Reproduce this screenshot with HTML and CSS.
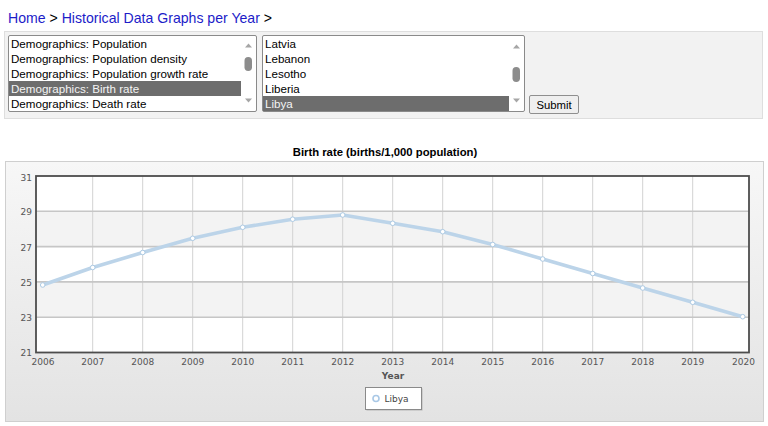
FILE: index.html
```html
<!DOCTYPE html>
<html>
<head>
<meta charset="utf-8">
<title>Historical Data Graphs per Year</title>
<link rel="stylesheet" href="styles.css">
</head>
<body>
<div class="crumbs"><a href="#">Home</a> &gt; <a href="#">Historical Data Graphs per Year</a> &gt;</div>
<form class="panel">
  <div class="listbox lb1">
    <ul class="opts">
      <li>Demographics: Population</li>
      <li>Demographics: Population density</li>
      <li>Demographics: Population growth rate</li>
      <li class="sel">Demographics: Birth rate</li>
      <li>Demographics: Death rate</li>
    </ul>
    <svg class="sbar" width="15" height="75" viewBox="0 0 15 75">
      <path d="M4 11.5 L7.5 7.5 L11 11.5 Z" fill="#a6a6a6"/>
      <rect x="3.5" y="21" width="7.5" height="14" rx="3.7" fill="#8c8c8c"/>
      <path d="M4 62.5 L7.5 66.5 L11 62.5 Z" fill="#a6a6a6"/>
    </svg>
  </div>
  <div class="listbox lb2">
    <ul class="opts">
      <li>Latvia</li>
      <li>Lebanon</li>
      <li>Lesotho</li>
      <li>Liberia</li>
      <li class="sel">Libya</li>
    </ul>
    <svg class="sbar" width="15" height="75" viewBox="0 0 15 75">
      <path d="M4 12.5 L7.5 8.5 L11 12.5 Z" fill="#a6a6a6"/>
      <rect x="3.5" y="31" width="7.5" height="15" rx="3.7" fill="#8c8c8c"/>
      <path d="M4 62.5 L7.5 66.5 L11 62.5 Z" fill="#a6a6a6"/>
    </svg>
  </div>
  <button type="button" class="submit">Submit</button>
</form>
<h2 class="title">Birth rate (births/1,000 population)</h2>
<div class="chart">
  <svg class="plot" width="757" height="259" viewBox="6 162 757 259">
    <rect x="36" y="176" width="713" height="176.5" fill="#ffffff"/>
    <rect x="36" y="211.3" width="713" height="35.3" fill="#f3f3f3"/>
    <rect x="36" y="281.9" width="713" height="35.3" fill="#f3f3f3"/>
    <g stroke="#d2d2d2" stroke-width="1">
      <line x1="92.7" y1="176" x2="92.7" y2="352.5"/>
      <line x1="142.7" y1="176" x2="142.7" y2="352.5"/>
      <line x1="192.7" y1="176" x2="192.7" y2="352.5"/>
      <line x1="242.7" y1="176" x2="242.7" y2="352.5"/>
      <line x1="292.7" y1="176" x2="292.7" y2="352.5"/>
      <line x1="342.7" y1="176" x2="342.7" y2="352.5"/>
      <line x1="392.7" y1="176" x2="392.7" y2="352.5"/>
      <line x1="442.7" y1="176" x2="442.7" y2="352.5"/>
      <line x1="492.7" y1="176" x2="492.7" y2="352.5"/>
      <line x1="542.7" y1="176" x2="542.7" y2="352.5"/>
      <line x1="592.7" y1="176" x2="592.7" y2="352.5"/>
      <line x1="642.7" y1="176" x2="642.7" y2="352.5"/>
      <line x1="692.7" y1="176" x2="692.7" y2="352.5"/>
    </g>
    <g stroke="#c6c6c6" stroke-width="1.6">
      <line x1="36" y1="211.3" x2="749" y2="211.3"/>
      <line x1="36" y1="246.6" x2="749" y2="246.6"/>
      <line x1="36" y1="281.9" x2="749" y2="281.9"/>
      <line x1="36" y1="317.2" x2="749" y2="317.2"/>
    </g>
    <rect x="36" y="176" width="713" height="176.5" fill="none" stroke="#4d4d4d" stroke-width="1.8"/>
    <polyline fill="none" stroke="#bcd4e9" stroke-width="3.5" stroke-linejoin="round" stroke-linecap="round"
      points="42.7,285 92.7,267.5 142.7,252.5 192.7,238.3 242.7,227.3 292.7,219.2 342.7,215 392.7,223.3 442.7,231.7 492.7,244.5 542.7,259 592.7,273.5 642.7,288 692.7,302.3 742.7,316.7"/>
    <g fill="#ffffff" stroke="#aecbe4" stroke-width="1">
      <circle cx="42.7" cy="285" r="2.3"/>
      <circle cx="92.7" cy="267.5" r="2.3"/>
      <circle cx="142.7" cy="252.5" r="2.3"/>
      <circle cx="192.7" cy="238.3" r="2.3"/>
      <circle cx="242.7" cy="227.3" r="2.3"/>
      <circle cx="292.7" cy="219.2" r="2.3"/>
      <circle cx="342.7" cy="215" r="2.3"/>
      <circle cx="392.7" cy="223.3" r="2.3"/>
      <circle cx="442.7" cy="231.7" r="2.3"/>
      <circle cx="492.7" cy="244.5" r="2.3"/>
      <circle cx="542.7" cy="259" r="2.3"/>
      <circle cx="592.7" cy="273.5" r="2.3"/>
      <circle cx="642.7" cy="288" r="2.3"/>
      <circle cx="692.7" cy="302.3" r="2.3"/>
      <circle cx="742.7" cy="316.7" r="2.3"/>
    </g>
    <g class="ylab" text-anchor="end">
      <text x="32" y="180.5">31</text>
      <text x="32" y="215.3">29</text>
      <text x="32" y="250.6">27</text>
      <text x="32" y="285.9">25</text>
      <text x="32" y="321.2">23</text>
      <text x="32" y="356">21</text>
    </g>
    <g class="xlab" text-anchor="middle">
      <text x="43" y="364.5">2006</text>
      <text x="92.7" y="364.5">2007</text>
      <text x="142.7" y="364.5">2008</text>
      <text x="192.7" y="364.5">2009</text>
      <text x="242.7" y="364.5">2010</text>
      <text x="292.7" y="364.5">2011</text>
      <text x="342.7" y="364.5">2012</text>
      <text x="392.7" y="364.5">2013</text>
      <text x="442.7" y="364.5">2014</text>
      <text x="492.7" y="364.5">2015</text>
      <text x="542.7" y="364.5">2016</text>
      <text x="592.7" y="364.5">2017</text>
      <text x="642.7" y="364.5">2018</text>
      <text x="692.7" y="364.5">2019</text>
      <text x="743.5" y="364.5">2020</text>
    </g>
    <text class="axtitle" x="393" y="378.5" text-anchor="middle">Year</text>
    <rect x="366.5" y="388.5" width="56" height="22" fill="#b5b5b5"/>
    <rect x="365.5" y="387.5" width="56" height="22" fill="#ffffff" stroke="#8a8a8a" stroke-width="1"/>
    <circle cx="376" cy="398.5" r="3" fill="#ffffff" stroke="#a9c8e6" stroke-width="1.6"/>
    <text class="leg" x="384.5" y="401.8">Libya</text>
  </svg>
</div>
</body>
</html>
```

FILE: styles.css
```css
html, body {
  margin: 0;
  padding: 0;
  background: #ffffff;
}

body {
  font-family: "Liberation Sans", Arial, sans-serif;
  color: #000000;
}

.crumbs {
  padding: 9px 0 0 8px;
  font-size: 14.1px;
  line-height: 18px;
  height: 18px;
}

.crumbs a {
  color: #1c1cc8;
  text-decoration: none;
}

.panel {
  margin: 4px 0 0 4px;
  width: 759px;
  box-sizing: border-box;
  background: #f2f2f2;
  border: 1px solid #dedede;
  padding: 3px 3px 6px 3px;
  display: flex;
  align-items: flex-end;
}

.listbox {
  box-sizing: border-box;
  height: 77px;
  border: 1px solid #8a8a8a;
  border-radius: 2px;
  background: #ffffff;
  display: flex;
}

.lb1 {
  width: 249px;
}

.lb2 {
  width: 263px;
  margin-left: 5px;
}

.opts {
  list-style: none;
  margin: 0;
  padding: 0;
  flex: 1;
  min-width: 0;
}

.opts li {
  font-size: 11.6px;
  line-height: 15px;
  height: 15px;
  padding-left: 2px;
  white-space: nowrap;
  overflow: hidden;
}

.opts li.sel {
  background: #6d6d6d;
  color: #f4f4f4;
}

.sbar {
  flex: none;
  display: block;
}

.submit {
  margin: 0 0 -2px 4px;
  width: 50px;
  height: 19px;
  padding: 0;
  font-family: "Liberation Sans", Arial, sans-serif;
  font-size: 11.3px;
  color: #000000;
  background: #efefef;
  border: 1px solid #8f8f8f;
  border-radius: 2px;
}

.title {
  margin: 26px 0 2px 0;
  font-size: 11.3px;
  line-height: 14px;
  font-weight: bold;
  text-align: center;
  width: 770px;
}

.chart {
  margin-left: 5px;
  width: 759px;
  height: 261px;
  box-sizing: border-box;
  border: 1px solid #cfcfcf;
  background: linear-gradient(#f7f7f7, #ececec 55%, #e3e3e3);
}

.plot {
  display: block;
}

.ylab text,
.xlab text {
  font-family: "DejaVu Sans", Verdana, sans-serif;
  font-size: 9px;
  fill: #555555;
}

.axtitle {
  font-family: "DejaVu Sans", Verdana, sans-serif;
  font-size: 9px;
  font-weight: bold;
  fill: #555555;
}

.leg {
  font-family: "DejaVu Sans", Verdana, sans-serif;
  font-size: 9px;
  fill: #444444;
}
```
